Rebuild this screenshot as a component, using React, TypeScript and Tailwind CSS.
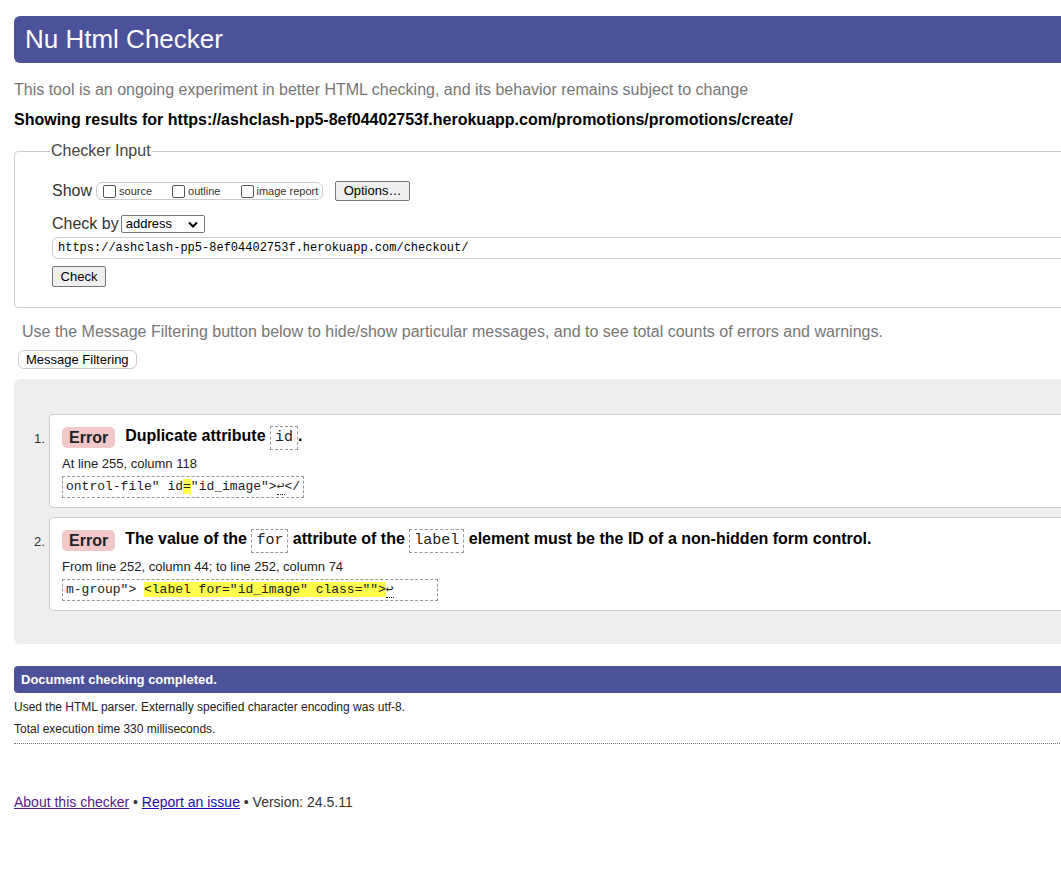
import type { ReactNode } from 'react';

const BLUE = 'bg-[#4b5299]';

function Code({ children }: { children: ReactNode }) {
  return (
    <code className="inline-block border border-dashed border-[#999] px-[4px] py-[1px] font-['Liberation_Mono',monospace] text-[15px] font-normal leading-[20px] text-[#222]">
      {children}
    </code>
  );
}

function Extract({ children }: { children: ReactNode }) {
  return (
    <div className="mt-[3px] inline-block border border-dashed border-[#999] px-[3px] font-['Liberation_Mono',monospace] text-[13px] leading-[20px] text-[#222]">
      {children}
    </div>
  );
}

function Ret() {
  return <span className="border-b border-dotted border-[#222] leading-[14px]">↩</span>;
}

type Msg = { n: number; text: ReactNode; where: string; extract: ReactNode };

const messages: Msg[] = [
  {
    n: 1,
    text: (
      <>
        Duplicate attribute <Code>id</Code>.
      </>
    ),
    where: 'At line 255, column 118',
    extract: (
      <>
        ontrol-file" id<span className="bg-[#ffff4d]">=</span>"id_image"&gt;
        <Ret />
        &lt;/
      </>
    ),
  },
  {
    n: 2,
    text: (
      <>
        The value of the <Code>for</Code> attribute of the <Code>label</Code> element must be the ID of a
        non-hidden form control.
      </>
    ),
    where: 'From line 252, column 44; to line 252, column 74',
    extract: (
      <>
        m-group"&gt; <span className="bg-[#ffff4d]">&lt;label for="id_image" class=""&gt;</span>
        <Ret />
        <span className="inline-block w-[40px]" />
      </>
    ),
  },
];

export default function App() {
  return (
    <div className="min-h-[878px] w-[1061px] overflow-hidden bg-white font-['Liberation_Sans',Arial,sans-serif] text-[#222]">
      <div className="ml-[14px] w-[1100px] pt-[16px]">
        {/* Title bar */}
        <div className={`flex h-[47px] items-center rounded-l-[6px] ${BLUE} pl-[11px] text-[26px] text-white`}>
          Nu Html Checker
        </div>

        <p className="mt-[17px] text-[16px] leading-[20px] text-[#777]">
          This tool is an ongoing experiment in better HTML checking, and its behavior remains subject to change
        </p>
        <p className="mt-[10px] text-[16px] font-bold leading-[20px] text-black">
          Showing results for https://ashclash-pp5-8ef04402753f.herokuapp.com/promotions/promotions/create/
        </p>

        {/* Checker input */}
        <fieldset className="mt-[11px] h-[167px] rounded-l-[4px] border border-[#ccc] pl-[37px]">
          <legend className="-ml-[2px] px-[1px] text-[16px] leading-[20px] text-[#444]">Checker Input</legend>

          <div className="mt-[20px] flex h-[20px] items-center">
            <span className="text-[16px] text-[#333]">Show</span>
            <div className="ml-[4px] flex h-[18px] w-[227px] items-center rounded-[6px] border border-[#ccc] pl-[6px] text-[11px] text-[#333]">
              <label className="flex items-center">
                <input type="checkbox" className="h-[13px] w-[13px] appearance-none rounded-[2px] border border-[#555] bg-white" />
                <span className="ml-[3px]">source</span>
              </label>
              <label className="ml-[20px] flex items-center">
                <input type="checkbox" className="h-[13px] w-[13px] appearance-none rounded-[2px] border border-[#555] bg-white" />
                <span className="ml-[3px]">outline</span>
              </label>
              <label className="ml-[21px] flex items-center">
                <input type="checkbox" className="h-[13px] w-[13px] appearance-none rounded-[2px] border border-[#555] bg-white" />
                <span className="ml-[2px]">image report</span>
              </label>
            </div>
            <button className="ml-[12px] h-[20px] w-[75px] rounded-[2px] border border-[#767676] bg-[#efefef] text-[13px] leading-[18px] text-black">
              Options…
            </button>
          </div>

          <div className="mt-[13px] flex h-[20px] items-center">
            <span className="text-[16px] text-[#333]">Check by</span>
            <div className="ml-[2px] flex h-[18px] w-[84px] items-center justify-between rounded-[2px] border border-[#767676] pl-[4px] pr-[6px] text-[13px] text-black">
              address
              <svg width="10" height="7" viewBox="0 0 10 7">
                <path d="M1 1.5 5 5.5 9 1.5" fill="none" stroke="#000" strokeWidth="2" />
              </svg>
            </div>
          </div>

          <div className="mt-[3px] flex h-[22px] items-center rounded-l-[6px] border border-[#ccc] pl-[5px] font-['Liberation_Mono',monospace] text-[12px] text-black">
            https://ashclash-pp5-8ef04402753f.herokuapp.com/checkout/
          </div>

          <button className="mt-[7px] h-[21px] w-[54px] rounded-[2px] border border-[#767676] bg-[#efefef] text-[13px] leading-[19px] text-black">
            Check
          </button>
        </fieldset>

        <p className="ml-[8px] mt-[14px] text-[16px] leading-[20px] text-[#777]">
          Use the Message Filtering button below to hide/show particular messages, and to see total counts of errors and warnings.
        </p>
        <button className="ml-[4px] mt-[8px] h-[19px] rounded-[6px] border border-[#ccc] bg-white px-[7px] text-[13px] leading-[17px] text-black">
          Message Filtering
        </button>

        {/* Results */}
        <div className="mt-[8px] h-[265px] rounded-l-[6px] bg-[#eeeeee] pl-[35px] pt-[35px]">
          <ol className="flex flex-col gap-[9px]">
            {messages.map((m) => (
              <li key={m.n} className="relative h-[94px] rounded-l-[4px] border border-[#ccc] bg-white pl-[12px] pt-[9px]">
                <span className="absolute left-[-16px] top-[14px] text-[13px] text-[#333]">{m.n}.</span>
                <div className="flex items-center text-[16px] font-bold leading-[24px] text-black">
                  <span className="mr-[10px] rounded-[5px] bg-[#f1c8c8] px-[7px] leading-[21px] text-[#222]">Error</span>
                  <span>{m.text}</span>
                </div>
                <div className="mt-[5px] text-[13px] leading-[18px] text-[#222]">{m.where}</div>
                <Extract>{m.extract}</Extract>
              </li>
            ))}
          </ol>
        </div>

        <div className={`mt-[22px] flex h-[27px] items-center rounded-l-[4px] ${BLUE} pl-[7px] text-[13px] font-bold text-white`}>
          Document checking completed.
        </div>
        <p className="mt-[3px] text-[12px] leading-[22px] text-[#222]">
          Used the HTML parser. Externally specified character encoding was utf-8.
        </p>
        <p className="text-[12px] leading-[22px] text-[#222]">Total execution time 330 milliseconds.</p>
        <div className="mt-[3px] border-b border-dotted border-[#777]" />

        <p className="mt-[48px] text-[14px] leading-[20px] text-[#333]">
          <a href="#" className="text-[#551a8b] underline">About this checker</a>
          {' • '}
          <a href="#" className="text-[#1a0dab] underline">Report an issue</a>
          {' • Version: 24.5.11'}
        </p>
      </div>
    </div>
  );
}
